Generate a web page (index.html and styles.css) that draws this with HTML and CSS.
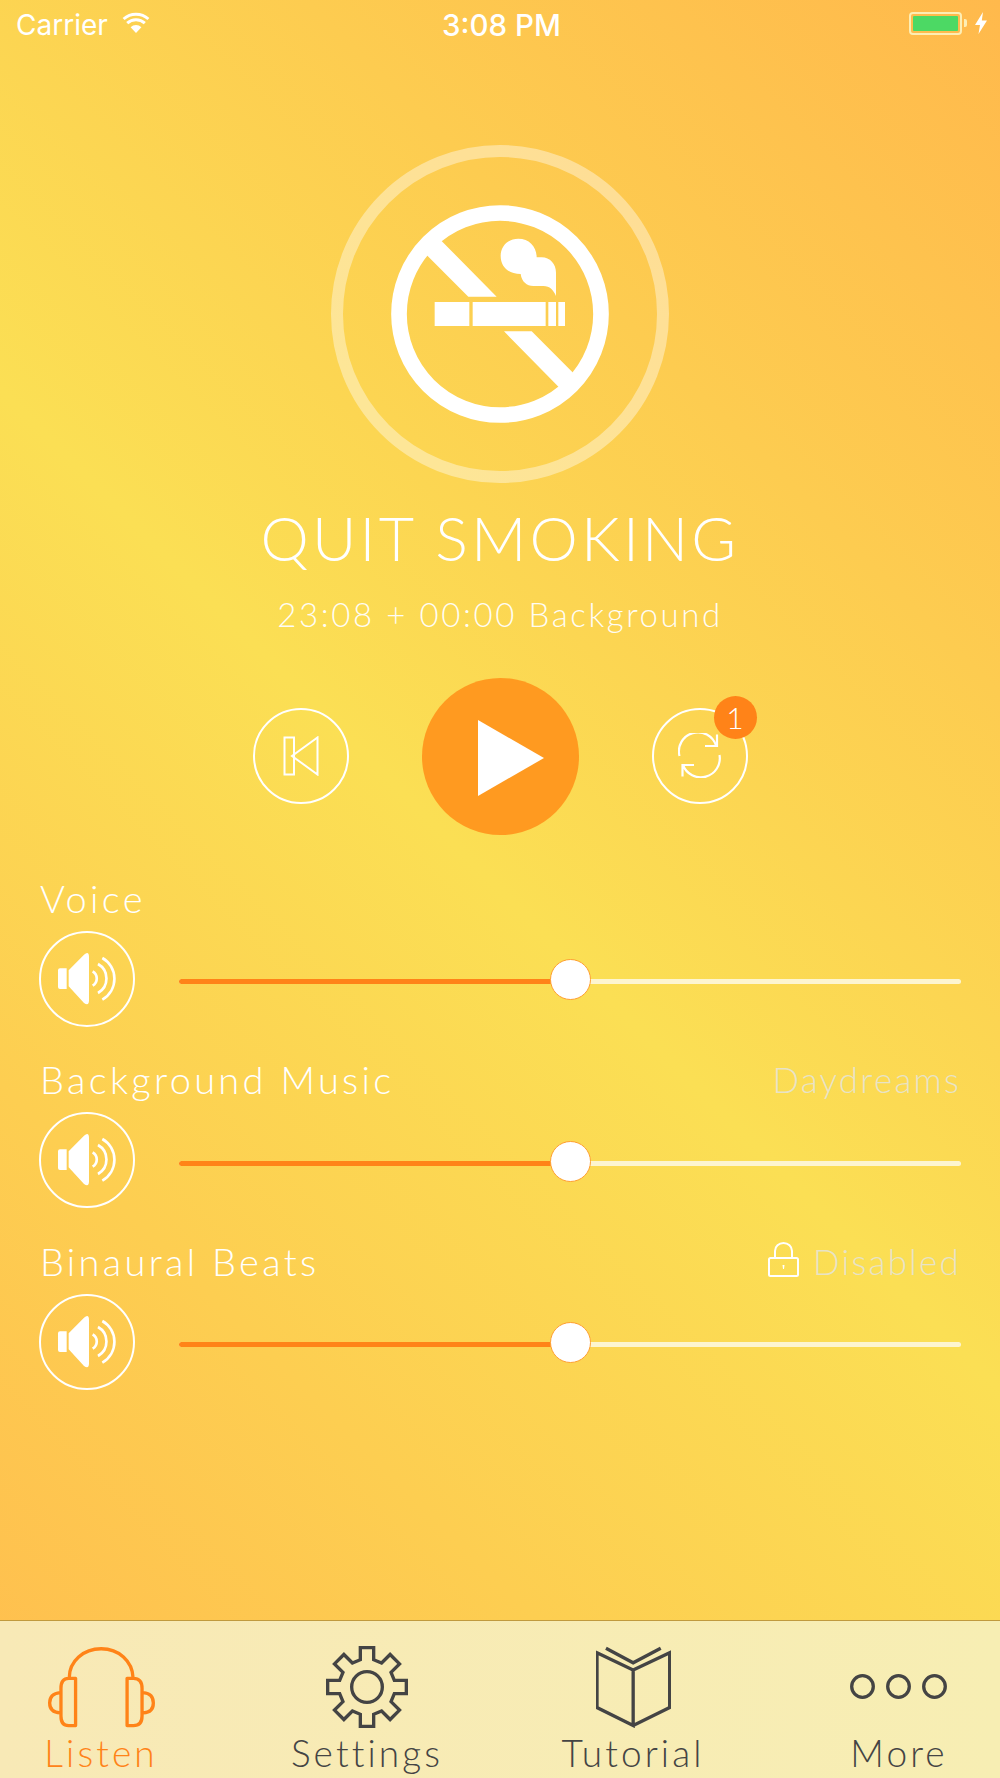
FILE: index.html
```html
<!DOCTYPE html>
<html lang="en">
<head>
<meta charset="utf-8">
<title>Quit Smoking</title>
<link rel="stylesheet" href="styles.css">
</head>
<body>
<div class="app">
  <header class="status">
    <div class="status-left">
      <span>Carrier</span>
      <svg class="wifi" viewBox="0 0 28 21"><path d="M14 21 8.600 15.200A8 8 0 0 1 19.400 15.200Z" fill="currentColor"/><path d="M5.200 11.200A13 13 0 0 1 22.800 11.200M1.600 7A18.500 18.500 0 0 1 26.400 7" fill="none" stroke="currentColor" stroke-width="3"/></svg>
    </div>
    <div class="status-time">3:08 PM</div>
    <div class="status-right">
      <span class="battery"><span class="battery-level"></span></span>
      <span class="battery-nub"></span>
      <svg class="bolt" viewBox="0 0 12 22"><path d="M8 0 0 13H5L3.500 22 12 8.500H6.800Z" fill="currentColor"/></svg>
    </div>
  </header>

  <main class="player">
    <div class="ring">
      <svg class="no-smoking" viewBox="273 255 654 654">
        <circle cx="600" cy="582" r="303" fill="none" stroke="#fff" stroke-width="47"/>
        <path fill="#fff" d="M415 353 590 530H505L372 397ZM612 634H695L828 767 785 810ZM404 546H508V618H404ZM518 546H737V618H518ZM745 546H768V618H745ZM775 546H795V618H775Z"/>
        <path fill="#fff" d="M768 528C760 510 750 498 730 498H700C680 498 665 485 662 462 625 462 602 440 602 408 602 378 625 356 655 356 688 356 710 380 710 412H725C750 412 768 432 768 458Z"/>
      </svg>
    </div>
    <h1 class="title">QUIT SMOKING</h1>
    <p class="subtitle">23:08 + 00:00 Background</p>

    <div class="transport">
      <button class="round" type="button">
        <svg class="icon-back" viewBox="0 0 36 40"><path d="M1.500 1.500H11V38.500H1.500ZM34.500 1.500V38.500L9 20Z" fill="none" stroke="#fff" stroke-width="2"/></svg>
      </button>
      <button class="play" type="button">
        <svg class="icon-play" viewBox="0 0 66 76"><path d="M0 0 66 38 0 76Z" fill="#fff"/></svg>
      </button>
      <button class="round" type="button">
        <svg class="icon-repeat" viewBox="0 0 44 45"><path d="M1.500 23A19 19 0 0 1 38 12.500M39 1.500V13H27M41.500 22A19 19 0 0 1 5 32M16 32H4.500V43.500" fill="none" stroke="#fff" stroke-width="2.200"/></svg>
        <span class="badge">1</span>
      </button>
    </div>

    <section class="channels">
      <div class="channel">
        <div class="channel-head"><span>Voice</span></div>
        <div class="channel-body">
          <button class="round" type="button">
            <svg class="icon-speaker" viewBox="114 250 174 156"><path fill="#fff" d="M120 296H140V358H120Q114 358 114 352V302Q114 296 120 296ZM146 302 192 255Q207 243 207 262V392Q207 411 192 400L146 350Z"/><path fill="none" stroke="#fff" stroke-width="8" d="M218 305A25 25 0 0 1 218 348M234 283A50 50 0 0 1 234 370M247 265A72 72 0 0 1 247 390"/></svg>
          </button>
          <div class="slider"><div class="slider-fill" style="width:50%"></div><div class="slider-thumb" style="left:50%"></div></div>
        </div>
      </div>
      <div class="channel">
        <div class="channel-head"><span>Background Music</span><span class="channel-note">Daydreams</span></div>
        <div class="channel-body">
          <button class="round" type="button">
            <svg class="icon-speaker" viewBox="114 250 174 156"><path fill="#fff" d="M120 296H140V358H120Q114 358 114 352V302Q114 296 120 296ZM146 302 192 255Q207 243 207 262V392Q207 411 192 400L146 350Z"/><path fill="none" stroke="#fff" stroke-width="8" d="M218 305A25 25 0 0 1 218 348M234 283A50 50 0 0 1 234 370M247 265A72 72 0 0 1 247 390"/></svg>
          </button>
          <div class="slider"><div class="slider-fill" style="width:50%"></div><div class="slider-thumb" style="left:50%"></div></div>
        </div>
      </div>
      <div class="channel">
        <div class="channel-head"><span>Binaural Beats</span>
          <span class="channel-note locked">
            <svg class="icon-lock" viewBox="0 0 31 35"><path d="M2.500 16H28.500Q30 16 30 17.500V32.500Q30 34 28.500 34H2.500Q1 34 1 32.500V17.500Q1 16 2.500 16ZM7 16V9A8.500 8 0 0 1 24 9V16" fill="none" stroke="#fff" stroke-width="2"/><path d="M14.500 23H16.500L16 27H15Z" fill="#fff"/></svg>
            Disabled
          </span>
        </div>
        <div class="channel-body">
          <button class="round" type="button">
            <svg class="icon-speaker" viewBox="114 250 174 156"><path fill="#fff" d="M120 296H140V358H120Q114 358 114 352V302Q114 296 120 296ZM146 302 192 255Q207 243 207 262V392Q207 411 192 400L146 350Z"/><path fill="none" stroke="#fff" stroke-width="8" d="M218 305A25 25 0 0 1 218 348M234 283A50 50 0 0 1 234 370M247 265A72 72 0 0 1 247 390"/></svg>
          </button>
          <div class="slider"><div class="slider-fill" style="width:50%"></div><div class="slider-thumb" style="left:50%"></div></div>
        </div>
      </div>
    </section>
  </main>

  <nav class="tabs">
    <a class="tab tab-active">
      <span class="tab-icon"><svg class="icon-headphones" viewBox="140 135 328 246"><path fill="none" stroke="currentColor" stroke-width="10" stroke-linejoin="round" d="M207 230C207 180 250 143 303 143 356 143 397 180 399 230M226 232H205Q182 232 182 262V345Q182 374 205 374H226ZM381 232H400Q426 232 426 262V345Q426 374 400 374H381ZM180 275Q148 278 148 306 148 334 180 336M430 275Q460 278 460 306 460 334 430 336"/></svg></span>
      <span class="tab-label">Listen</span>
    </a>
    <a class="tab">
      <span class="tab-icon"><svg class="icon-gear" viewBox="-123 -123 246 246"><path fill="none" stroke="currentColor" stroke-width="10" d="M-20-118H20V-82L43.800-72.100 69.300-97.600 97.600-69.300 72.100-43.800 82-20H118V20H82L72.100 43.800 97.600 69.300 69.300 97.600 43.800 72.100 20 82V118H-20V82L-43.800 72.100-69.300 97.600-97.600 69.300-72.100 43.800-82 20H-118V-20H-82L-72.100-43.800-97.600-69.300-69.300-97.600-43.800-72.100-20-82Z"/><circle r="46" fill="none" stroke="currentColor" stroke-width="10"/></svg></span>
      <span class="tab-label">Settings</span>
    </a>
    <a class="tab">
      <span class="tab-icon"><svg class="icon-book" viewBox="285 135 226 246"><path fill="none" stroke="currentColor" stroke-width="10" d="M288 155 397 207V374L288 320ZM397 207 507 155V320L397 374M315 141 397 185 480 141"/></svg></span>
      <span class="tab-label">Tutorial</span>
    </a>
    <a class="tab">
      <span class="tab-icon"><svg class="icon-dots" viewBox="0 0 97 25"><g fill="none" stroke="currentColor" stroke-width="3.300"><circle cx="12.500" cy="12.500" r="10.800"/><circle cx="48.500" cy="12.500" r="10.800"/><circle cx="84.500" cy="12.500" r="10.800"/></g></svg></span>
      <span class="tab-label">More</span>
    </a>
  </nav>
</div>
</body>
</html>
```

FILE: styles.css
```css
* { box-sizing: border-box; }

html, body { margin: 0; padding: 0; }

body {
  font-family: "Lato", "Liberation Sans", sans-serif;
  font-weight: 300;
  color: #fff;
}

.app {
  width: 1000px;
  height: 1778px;
  display: flex;
  flex-direction: column;
  overflow: hidden;
  background: linear-gradient(225deg, #ffb94c 0%, #fbdf54 50%, #ffbd4e 100%);
}

/* Status bar */
.status {
  height: 46px;
  padding: 4px 13px 0 16px;
  display: grid;
  grid-template-columns: 1fr auto 1fr;
  align-items: center;
  font-family: "Inter", "Liberation Sans", sans-serif;
  font-size: 28px;
  font-weight: 400;
}
.status-left { display: flex; align-items: center; gap: 14px; }
.status-time { font-weight: 500; font-size: 29.500px; }
.status-right { display: flex; align-items: center; justify-content: flex-end; margin-top: -4px; }
.wifi { width: 28px; height: 21px; margin-top: -5px; }
.battery {
  width: 53px;
  height: 23px;
  padding: 2px;
  border: 2px solid #fdeeb4;
  border-radius: 4px;
  display: block;
}
.battery-level { display: block; height: 100%; background: #4cd964; border-radius: 1px; }
.battery-nub { width: 3px; height: 8px; margin-left: 2px; background: #fdeeb4; border-radius: 0 2px 2px 0; }
.bolt { width: 12px; height: 22px; margin-left: 8px; }

/* Player */
.player { flex: 1; display: flex; flex-direction: column; align-items: center; }
.ring {
  width: 338px;
  height: 338px;
  margin-top: 99px;
  border: 12px solid rgba(255, 255, 255, 0.4);
  border-radius: 50%;
  display: flex;
  align-items: center;
  justify-content: center;
}
.no-smoking { width: 218px; height: 218px; }
.title {
  margin: 25px 0 0;
  font-size: 61px;
  line-height: 60px;
  font-weight: 300;
  letter-spacing: 3.200px;
  white-space: nowrap;
}
.subtitle {
  margin: 26px 0 0;
  font-size: 33px;
  line-height: 40px;
  letter-spacing: 2.600px;
  white-space: nowrap;
  color: rgba(255, 255, 255, 0.95);
}

.transport { margin-top: 44px; display: flex; align-items: center; gap: 73px; }
.transport .round { margin-bottom: 2px; }
button { padding: 0; font: inherit; color: inherit; background: none; border: 0; }
.round {
  position: relative;
  flex: none;
  width: 96px;
  height: 96px;
  border: 2.500px solid #fff;
  border-radius: 50%;
  display: flex;
  align-items: center;
  justify-content: center;
}
.play {
  width: 157px;
  height: 157px;
  padding: 2px 0 0 21px;
  border-radius: 50%;
  background: #ff9a20;
  display: flex;
  align-items: center;
  justify-content: center;
}
.icon-back { width: 36px; height: 40px; }
.icon-play { width: 66px; height: 76px; }
.icon-repeat { width: 44px; height: 45px; }
.icon-speaker { width: 58px; height: 52px; }
.badge {
  position: absolute;
  left: 60px;
  top: -14px;
  width: 43px;
  height: 43px;
  border-radius: 50%;
  background: #ff8318;
  font-size: 30px;
  line-height: 43px;
  text-align: center;
}

/* Volume channels */
.channels {
  align-self: stretch;
  margin-top: 42.500px;
  padding: 0 39px;
  display: flex;
  flex-direction: column;
  gap: 32.500px;
}
.channel-head {
  height: 40px;
  padding-left: 1px;
  display: flex;
  align-items: center;
  justify-content: space-between;
  font-size: 38px;
  line-height: 40px;
  letter-spacing: 3.300px;
  white-space: nowrap;
}
.channel-note { font-size: 35px; letter-spacing: 2.200px; color: #e8e3c6; }
.locked { display: flex; align-items: center; gap: 14px; }
.icon-lock { width: 31px; height: 35px; margin-top: -3px; }
.channel-body { margin-top: 13px; display: flex; align-items: center; gap: 44px; }
.slider {
  position: relative;
  flex: 1;
  height: 5px;
  margin-top: 6px;
  border-radius: 3px;
  background: #fdf5d0;
}
.slider-fill { height: 100%; border-radius: 3px; background: #ff8318; }
.slider-thumb {
  position: absolute;
  top: 50%;
  width: 41px;
  height: 41px;
  margin: -22.500px 0 0 -20.500px;
  border: 1px solid #ff9f30;
  border-radius: 50%;
  background: #fff;
}

/* Tab bar */
.tabs {
  flex: none;
  height: 158px;
  padding: 25px 47px 0;
  display: flex;
  justify-content: space-between;
  background: linear-gradient(90deg, #f8e9b6, #f7eeb3);
  border-top: 1px solid #c09a3e;
  color: #444;
}
.tab { width: 108px; display: flex; flex-direction: column; align-items: center; }
.tab-active { color: #ff8318; }
.tab-icon { height: 82px; display: flex; align-items: center; }
.tab-label {
  margin-top: 5px;
  font-size: 37px;
  line-height: 40px;
  letter-spacing: 3.100px;
  white-space: nowrap;
}
.icon-headphones { width: 109px; height: 82px; }
.icon-gear { width: 82px; height: 82px; }
.icon-book { width: 75px; height: 82px; }
.icon-dots { width: 97px; height: 25px; margin: -2px 0 0 -2px; }
```
